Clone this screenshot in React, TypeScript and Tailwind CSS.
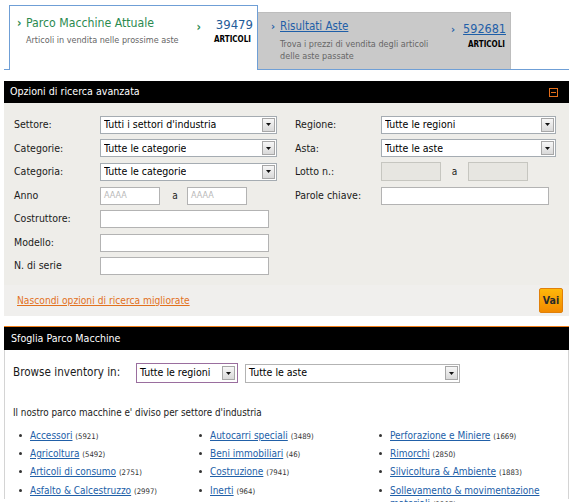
import React from "react";

function Arrow({ className = "" }: { className?: string }) {
  return (
    <div
      className={`flex h-[14px] w-[13px] items-center justify-center border border-[#a7a7a7] bg-gradient-to-b from-[#f7f7f7] to-[#d9d9d9] ${className}`}
    >
      <svg width="5" height="3" viewBox="0 0 5 3">
        <path d="M0 0H5L2.5 3Z" fill="#111" />
      </svg>
    </div>
  );
}

function Select({ text, className }: { text: string; className: string }) {
  return (
    <div className={`flex items-center justify-between border border-[#a5acb2] bg-white pl-[3px] pr-[1px] text-[10.5px] text-black ${className}`}>
      <span className="truncate">{text}</span>
      <Arrow />
    </div>
  );
}

function Input({ className, placeholder, disabled }: { className: string; placeholder?: string; disabled?: boolean }) {
  return (
    <div
      className={`flex items-center border pl-[3px] text-[9px] text-[#b8b8b8] ${disabled ? "border-[#c6c6c0] bg-[#e7e6e1]" : "border-[#b3b3b3] bg-white"} ${className}`}
    >
      {placeholder}
    </div>
  );
}

function Row({ label, children }: { label: string; children: React.ReactNode }) {
  return (
    <div className="flex h-[23.6px] items-center">
      <div className="w-[86px] text-[10.5px] text-[#1a1a1a]">{label}</div>
      {children}
    </div>
  );
}

const cols: [string, string][][] = [
  [
    ["Accessori", "(5921)"],
    ["Agricoltura", "(5492)"],
    ["Articoli di consumo", "(2751)"],
    ["Asfalto & Calcestruzzo", "(2997)"],
  ],
  [
    ["Autocarri speciali", "(3489)"],
    ["Beni immobiliari", "(46)"],
    ["Costruzione", "(7941)"],
    ["Inerti", "(964)"],
  ],
  [
    ["Perforazione e Miniere", "(1669)"],
    ["Rimorchi", "(2850)"],
    ["Silvicoltura & Ambiente", "(1883)"],
    ["Sollevamento & movimentazione materiali", "(2207)"],
  ],
];

export default function App() {
  return (
    <div className="h-[502px] w-[575px] overflow-hidden bg-white font-['DejaVu_Sans_Condensed','DejaVu_Sans',sans-serif] font-stretch-condensed">
      {/* Tabs */}
      <div className="ml-[4px] flex h-[70px] w-[565px] items-end border-b border-[#6f9fd6] pl-[5px]">
        <div className="-mb-px flex h-[65px] w-[249px] justify-between border border-b-0 border-[#6f9fd6] bg-white pt-[9px] pl-[7px] pr-[4px]">
          <div className="flex flex-col">
            <div className="flex items-center">
              <span className="w-[9px] text-[12px] font-bold leading-[16px] text-[#2b8a4f]">›</span>
              <span className="text-[12.2px] leading-[16px] text-[#2b8a4f]">Parco Macchine Attuale</span>
            </div>
            <div className="mt-[3px] pl-[9px] text-[9px] leading-[12px] text-[#666]">
              Articoli in vendita nelle prossime aste
            </div>
          </div>
          <div className="flex items-start pt-[2px]">
            <span className="mt-[3px] mr-[13px] text-[12px] font-bold leading-[14px] text-[#2b8a4f]">›</span>
            <div className="flex flex-col items-end">
              <span className="text-[13px] leading-[15px] text-[#1f5c99]">39479</span>
              <span className="mt-[3px] pr-[2px] text-[8px] font-bold leading-[10px] text-black">ARTICOLI</span>
            </div>
          </div>
        </div>
        <div className="flex h-[57px] w-[253px] justify-between border-t border-r border-[#bdbdbd] bg-[#c9c9c9] pt-[6px] pl-[13px] pr-[4px]">
          <div className="flex flex-col">
            <div className="flex items-center">
              <span className="w-[9px] text-[11px] font-bold leading-[15px] text-[#1f5fa8]">›</span>
              <span className="text-[11.5px] leading-[15px] text-[#1f5fa8] underline">Risultati Aste</span>
            </div>
            <div className="mt-[4px] pl-[9px] text-[9px] leading-[12px] text-[#666]">
              Trova i prezzi di vendita degli articoli
              <br />
              delle aste passate
            </div>
          </div>
          <div className="flex items-start pt-[2px]">
            <span className="mt-[2px] mr-[8px] text-[11px] font-bold leading-[14px] text-[#1f5fa8]">›</span>
            <div className="flex flex-col items-end">
              <span className="text-[12.5px] leading-[15px] text-[#1f5fa8] underline">592681</span>
              <span className="mt-[4px] pr-[1px] text-[8px] font-bold leading-[10px] text-black">ARTICOLI</span>
            </div>
          </div>
        </div>
      </div>

      {/* Advanced search */}
      <div className="mt-[11px] ml-[4px] w-[565px] bg-[#eeede9]">
        <div className="flex h-[22px] items-center justify-between bg-black pl-[6px] pr-[11px]">
          <span className="text-[10.6px] text-white">Opzioni di ricerca avanzata</span>
          <div className="flex h-[9px] w-[9px] items-center justify-center border border-[#e46f1c]">
            <div className="h-px w-[5px] bg-[#e46f1c]" />
          </div>
        </div>
        <div className="grid grid-cols-[281px_1fr] pt-[10px] pl-[10px]">
          <div className="flex flex-col">
            <Row label="Settore:">
              <Select text="Tutti i settori d'industria" className="h-[18px] w-[177px]" />
            </Row>
            <Row label="Categorie:">
              <Select text="Tutte le categorie" className="h-[18px] w-[177px]" />
            </Row>
            <Row label="Categoria:">
              <Select text="Tutte le categorie" className="h-[18px] w-[177px]" />
            </Row>
            <Row label="Anno">
              <Input className="h-[18px] w-[60px]" placeholder="AAAA" />
              <span className="w-[27px] pl-[3px] text-center text-[10px] text-[#222]">a</span>
              <Input className="h-[18px] w-[60px]" placeholder="AAAA" />
            </Row>
            <Row label="Costruttore:">
              <Input className="h-[18px] w-[169px]" />
            </Row>
            <Row label="Modello:">
              <Input className="h-[18px] w-[169px]" />
            </Row>
            <Row label="N. di serie">
              <Input className="h-[18px] w-[169px]" />
            </Row>
          </div>
          <div className="flex flex-col">
            <Row label="Regione:">
              <Select text="Tutte le regioni" className="h-[18px] w-[175px]" />
            </Row>
            <Row label="Asta:">
              <Select text="Tutte le aste" className="h-[18px] w-[175px]" />
            </Row>
            <Row label="Lotto n.:">
              <Input className="h-[19px] w-[60px]" disabled />
              <span className="w-[27px] text-center text-[10px] text-[#222]">a</span>
              <Input className="h-[19px] w-[60px]" disabled />
            </Row>
            <Row label="Parole chiave:">
              <Input className="h-[18px] w-[168px]" />
            </Row>
          </div>
        </div>
        <div className="mt-[7px] flex h-[31px] items-center justify-between bg-[#f0efed] pl-[13px] pr-[6px]">
          <span className="text-[10.2px] text-[#e2711d] underline">Nascondi opzioni di ricerca migliorate</span>
          <div className="flex h-[25px] w-[24px] items-center justify-center rounded-[2px] border border-[#e0800a] bg-gradient-to-b from-[#ffb80a] to-[#f28a00] text-[10.5px] font-bold text-[#2a2a2a]">
            Vai
          </div>
        </div>
      </div>

      {/* Browse */}
      <div className="mt-[10px] ml-[4px] w-[565px] border-x border-[#d4d4d4] bg-white">
        <div className="-mx-px flex h-[24px] items-center border-t border-[#f07f1a] bg-black pl-[7px]">
          <span className="text-[10.6px] text-white">Sfoglia Parco Macchine</span>
        </div>
        <div className="flex items-center pt-[13px] pl-[8px]">
          <span className="w-[123px] text-[11.6px] text-[#1a1a1a]">Browse inventory in:</span>
          <div className="flex h-[20px] w-[102px] items-center justify-between border border-[#9a6e9e] bg-white pl-[3px] pr-[2px] text-[10.5px] text-black">
            <span>Tutte le regioni</span>
            <Arrow />
          </div>
          <div className="ml-[7px] flex h-[19px] w-[215px] items-center justify-between border border-[#b3b3b3] bg-white pl-[3px] pr-[1px] text-[10.5px] text-black">
            <span>Tutte le aste</span>
            <Arrow />
          </div>
        </div>
        <div className="mt-[24px] pl-[8px] text-[9.8px] leading-[12px] text-[#1a1a1a]">
          Il nostro parco macchine e' diviso per settore d'industria
        </div>
        <div className="mt-[7px] grid grid-cols-[180px_180px_1fr] pl-[13px] pr-[10px]">
          {cols.map((col, ci) => (
            <div key={ci} className="flex flex-col">
              {col.map(([name, count]) => (
                <div key={name} className="flex h-[18.3px] items-start pt-[2.5px] leading-[13px]">
                  <div className="mt-[5px] ml-[1px] h-[3px] w-[3px] shrink-0 rounded-full bg-[#333]" />
                  <div className="ml-[8px] text-[10px]">
                    <span className="text-[#2160a8] underline">{name}</span>{" "}
                    <span className="text-[7.7px] text-[#333]">{count}</span>
                  </div>
                </div>
              ))}
            </div>
          ))}
        </div>
      </div>
    </div>
  );
}
